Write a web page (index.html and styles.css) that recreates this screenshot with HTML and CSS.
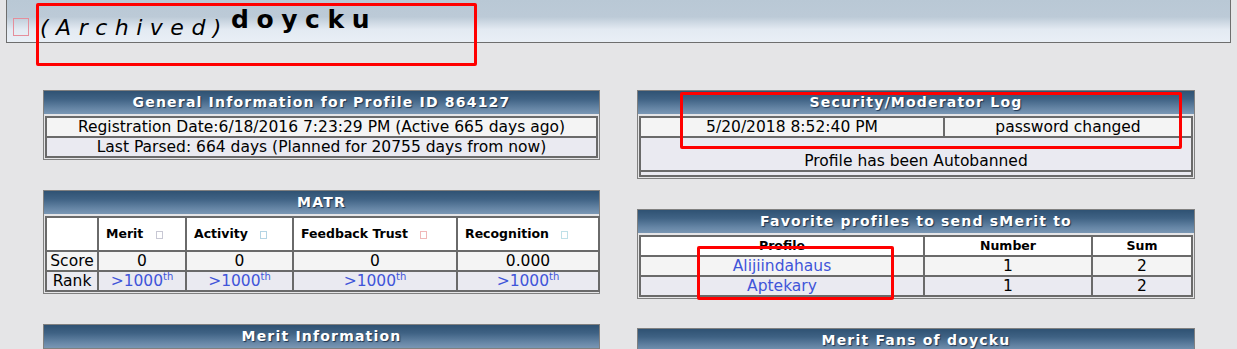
FILE: index.html
```html
<!DOCTYPE html>
<html lang="en">
  <head>
    <meta charset="UTF-8" />
    <title>doycku - profile</title>
    <link rel="stylesheet" href="styles.css">
  </head>
  <body>
    <div class="top-bar">
      <span class="broken-img"></span>
      <span class="archived">(Archived)</span>
      <span class="user-name">doycku</span>
    </div>

    <div class="columns">
      <div class="col">
        <div class="panel">
          <div class="panel-title">General Information for Profile ID 864127</div>
          <table class="grid">
            <tr class="row-a"><td>Registration Date:6/18/2016 7:23:29 PM (Active 665 days ago)</td></tr>
            <tr class="row-b"><td>Last Parsed: 664 days (Planned for 20755 days from now)</td></tr>
          </table>
        </div>

        <div class="panel">
          <div class="panel-title">MATR</div>
          <table class="grid matr">
            <colgroup>
              <col class="w-label"><col class="w-merit"><col class="w-activity"><col class="w-trust"><col class="w-recog">
            </colgroup>
            <tr class="row-head">
              <td></td>
              <td class="head-cell">Merit <span class="mini-img grey"></span></td>
              <td class="head-cell">Activity <span class="mini-img blue"></span></td>
              <td class="head-cell">Feedback Trust <span class="mini-img pink"></span></td>
              <td class="head-cell">Recognition <span class="mini-img cyan"></span></td>
            </tr>
            <tr class="row-a">
              <td>Score</td><td>0</td><td>0</td><td>0</td><td>0.000</td>
            </tr>
            <tr class="row-b">
              <td>Rank</td>
              <td><a class="link" href="#">&gt;1000<sup>th</sup></a></td>
              <td><a class="link" href="#">&gt;1000<sup>th</sup></a></td>
              <td><a class="link" href="#">&gt;1000<sup>th</sup></a></td>
              <td><a class="link" href="#">&gt;1000<sup>th</sup></a></td>
            </tr>
          </table>
        </div>

        <div class="panel">
          <div class="panel-title">Merit Information</div>
        </div>
      </div>

      <div class="col">
        <div class="panel">
          <div class="panel-title">Security/Moderator Log</div>
          <table class="grid">
            <colgroup><col class="w-date"><col></colgroup>
            <tr class="row-a"><td>5/20/2018 8:52:40 PM</td><td>password changed</td></tr>
            <tr class="row-b"><td colspan="2" class="banned">Profile has been Autobanned</td></tr>
            <tr class="row-empty"><td colspan="2"></td></tr>
          </table>
        </div>

        <div class="panel panel-fav">
          <div class="panel-title">Favorite profiles to send sMerit to</div>
          <table class="grid">
            <colgroup><col class="w-profile"><col class="w-number"><col></colgroup>
            <tr class="row-head"><th>Profile</th><th>Number</th><th>Sum</th></tr>
            <tr class="row-a"><td><a class="link" href="#">Alijiindahaus</a></td><td>1</td><td>2</td></tr>
            <tr class="row-b"><td><a class="link" href="#">Aptekary</a></td><td>1</td><td>2</td></tr>
          </table>
        </div>

        <div class="panel">
          <div class="panel-title">Merit Fans of doycku</div>
        </div>
      </div>
    </div>

    <!-- marcas rojas sobre la captura -->
    <div class="mark mark-name"></div>
    <div class="mark mark-log"></div>
    <div class="mark mark-fav"></div>
  </body>
</html>
```

FILE: styles.css
```css
body {
  margin: 0;
  background-color: #e5e5e7;
  font-family: "DejaVu Sans", Verdana, sans-serif;
  font-size: 15.5px;
  color: #000;
  position: relative;
  height: 349px;
  overflow: hidden;
}

.top-bar {
  margin: 0 6px;
  height: 42px;
  border: 1px solid #6e6e6e;
  border-top: none;
  background: linear-gradient(#b9c8d5 0%, #bccad7 40%, #e3eaf2 70%, #e9eff6 100%);
  display: flex;
  align-items: flex-start;
}

.broken-img {
  width: 14px;
  height: 16px;
  margin: 18px 0 0 6px;
  border: 1px solid #e58e9b;
}

.archived {
  margin: 15px 0 0 11px;
  font-size: 22px;
  line-height: 26px;
  font-style: italic;
  letter-spacing: 7.5px;
}

.user-name {
  margin: 5px 0 0 2px;
  font-size: 25px;
  line-height: 30px;
  font-weight: bold;
  letter-spacing: 7.6px;
}

.columns {
  display: grid;
  grid-template-columns: 557px 558px;
  column-gap: 37px;
  padding: 47px 0 0 43px;
}

.col {
  display: flex;
  flex-direction: column;
}

.panel {
  border: 1px solid #808080;
  margin-bottom: 30px;
}

.panel-fav {
  margin-bottom: 29px;
}

.panel-title {
  height: 23px;
  line-height: 23px;
  text-align: center;
  color: #fff;
  font-size: 14px;
  font-weight: bold;
  letter-spacing: 1.2px;
  text-shadow: 1px 1px 1px #1e3550;
  background: linear-gradient(#2f5273 0%, #3f6284 35%, #6585a5 75%, #7a97b4 100%);
}

.grid {
  width: calc(100% - 2px);
  margin: 2px 1px 1px;
  border: 1px solid #6a6a6a;
  border-spacing: 0;
  table-layout: fixed;
}

.grid td, .grid th {
  border: 1px solid #6a6a6a;
  padding: 0;
  height: 18px;
  line-height: 18px;
  text-align: center;
}

.grid th {
  font-size: 12.5px;
  font-weight: bold;
}

.row-a td {
  background-color: #f4f4f4;
}

.row-b td {
  background-color: #eaeaf1;
}

.row-head td, .row-head th {
  background-color: #fff;
}

.matr .row-head td {
  height: 32px;
}

.head-cell {
  text-align: left !important;
  padding-left: 7px !important;
  font-size: 12.5px;
  font-weight: bold;
}

.mini-img {
  display: inline-block;
  width: 5px;
  height: 6px;
  margin-left: 8px;
  border: 1px solid #c8c8d4;
  vertical-align: middle;
}

.mini-img.blue { border-color: #b4d4e4; }
.mini-img.pink { border-color: #f0b8b8; }
.mini-img.cyan { border-color: #bfe0e8; }

.w-label { width: 52px; }
.w-merit { width: 88px; }
.w-activity { width: 107px; }
.w-trust { width: 164px; }
.w-recog { width: 142px; }

.w-date { width: 304px; }
.w-profile { width: 284px; }
.w-number { width: 168px; }

.link {
  color: #3f55d9;
  text-decoration: none;
}

.link sup {
  font-size: 10px;
  line-height: 0;
}

.grid td.banned {
  height: 34px;
  line-height: 18px;
  padding-top: 14px;
  box-sizing: border-box;
}

.row-empty td {
  height: 3px;
  line-height: 3px;
  background-color: #eaeaf1;
}

.mark {
  position: absolute;
  border: 3px solid #ff0000;
  border-radius: 2px;
  box-sizing: border-box;
}

.mark-name { left: 36px; top: 3px; width: 441px; height: 63px; }
.mark-log { left: 680px; top: 92px; width: 502px; height: 57px; }
.mark-fav { left: 697px; top: 246px; width: 197px; height: 54px; }
```
